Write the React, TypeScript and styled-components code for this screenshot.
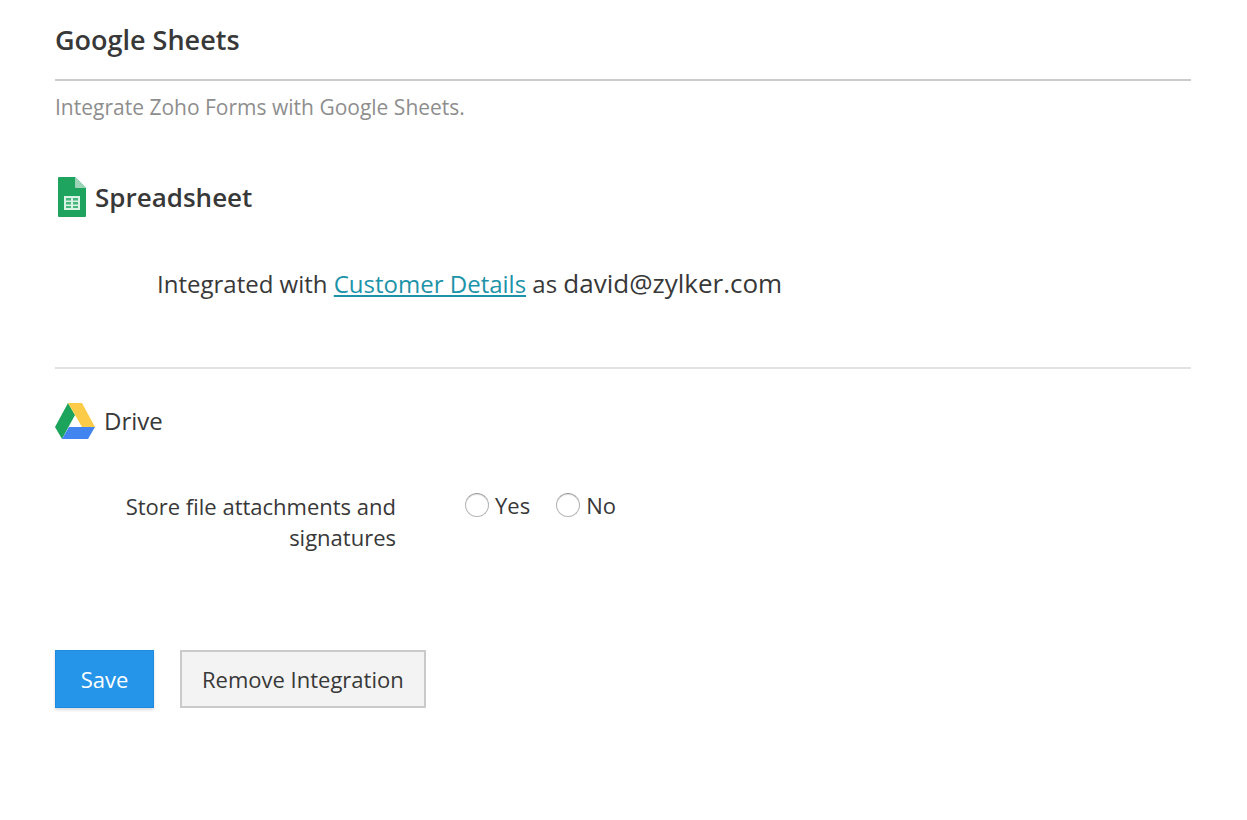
import React from 'react';
import styled, { createGlobalStyle } from 'styled-components';

const GlobalStyle = createGlobalStyle`
  * { box-sizing: border-box; }
  body { margin: 0; background: #fff; color: #383838; font-family: "Open Sans", sans-serif; font-size: 24px; }
`;
const Page = styled.main`padding: 20px 56px 40px 55px;`;
const Title = styled.h1`
  margin: 0; padding-bottom: 19px; border-bottom: 2px solid #cbcbcb;
  font-size: 27px; line-height: 40px; font-weight: 600;
`;
const Intro = styled.p`margin: 11px 0 0; font-size: 21px; line-height: 30px; color: #8e8e8e;`;
const SheetSection = styled.section`padding: 54px 0 63px; border-bottom: 2px solid #e2e2e2;`;
const DriveSection = styled.section`padding-top: 32px;`;
const Heading = styled.h2<{ $strong?: boolean }>`
  display: flex; align-items: center; gap: ${p => (p.$strong ? 8 : 9)}px;
  margin: 0; height: ${p => (p.$strong ? 42 : 40)}px; line-height: 40px;
  font-size: ${p => (p.$strong ? 26 : 24)}px; font-weight: ${p => (p.$strong ? 600 : 400)};
`;
const Status = styled.p`margin: 45px 0 0 102px; line-height: 40px; font-size: 24px;`;
const Link = styled.a`color: #1d93a9; text-decoration: underline;`;
const Account = styled.span`font-size: 26px;`;
const Field = styled.fieldset`
  display: flex; gap: 69px; margin: 50px 0 0; padding: 0; border: 0; font-size: 22px; line-height: 31px;
`;
const FieldLabel = styled.div`width: 341px; padding-left: 60px; text-align: right;`;
const Options = styled.div`display: flex; align-items: flex-start; gap: 26px; line-height: 28px;`;
const Option = styled.label`display: flex; align-items: center; gap: 6px;`;
const Radio = styled.input`
  appearance: none; width: 24px; height: 24px; margin: 0;
  border: 1px solid #b4b4b4; border-top-color: #989898; border-radius: 50%; background: #fff;
  box-shadow: inset 0 1px 1px rgba(0, 0, 0, 0.12);
  &:checked { border: 7px solid #2796ec; }
`;
const Actions = styled.div`display: flex; gap: 26px; margin-top: 97px;`;
const Button = styled.button<{ $primary?: boolean }>`
  min-width: 99px; height: 58px; padding: 0 20px; font: inherit; font-size: 22px; cursor: pointer;
  color: ${p => (p.$primary ? '#fff' : '#383838')};
  background: ${p => (p.$primary ? '#2595e9' : '#f3f3f3')};
  border: ${p => (p.$primary ? '1px solid #1f8be0' : '2px solid #cacaca')};
  box-shadow: ${p => (p.$primary ? '0 2px 3px rgba(0, 0, 0, 0.14)' : 'none')};
`;

const SheetIcon = () => (
  <svg width="32" height="42" viewBox="0 0 32 42" aria-hidden="true">
    <path d="M4 1H20L31 12V40Q31 41 30 41H4Q3 41 3 40V2Q3 1 4 1Z" fill="#1fa45f" />
    <path d="M20 1L31 12H21Q20 12 20 11Z" fill="#9bd4b6" />
    <path d="M9 20H25V34H9Z" fill="#d9f2e4" />
    <path d="M11 22H16V24.500H11ZM18 22H23V24.500H18ZM11 26H16V28.500H11ZM18 26H23V28.500H18ZM11 30H16V32H11ZM18 30H23V32H18Z" fill="#45b67c" />
  </svg>
);
const DriveIcon = () => (
  <svg width="40" height="38" viewBox="0 0 40 38" aria-hidden="true">
    <path d="M13 1L20 13L7 37L0 25Z" fill="#1da45c" />
    <path d="M13 1H27L40 25H27Z" fill="#fccb48" />
    <path d="M14 25H40L33 37H7Z" fill="#4285f0" />
  </svg>
);

export default function App() {
  return (
    <>
      <GlobalStyle />
      <Page>
        <Title>Google Sheets</Title>
        <Intro>Integrate Zoho Forms with Google Sheets.</Intro>
        <SheetSection>
          <Heading $strong><SheetIcon />Spreadsheet</Heading>
          <Status>Integrated with <Link href="#details">Customer Details</Link> as <Account>david@zylker.com</Account></Status>
        </SheetSection>
        <DriveSection>
          <Heading><DriveIcon />Drive</Heading>
          <Field role="radiogroup" aria-labelledby="store">
            <FieldLabel id="store">Store file attachments and signatures</FieldLabel>
            <Options>
              <Option><Radio type="radio" name="store" value="yes" />Yes</Option>
              <Option><Radio type="radio" name="store" value="no" />No</Option>
            </Options>
          </Field>
        </DriveSection>
        <Actions>
          <Button type="button" $primary>Save</Button>
          <Button type="button">Remove Integration</Button>
        </Actions>
      </Page>
    </>
  );
}
